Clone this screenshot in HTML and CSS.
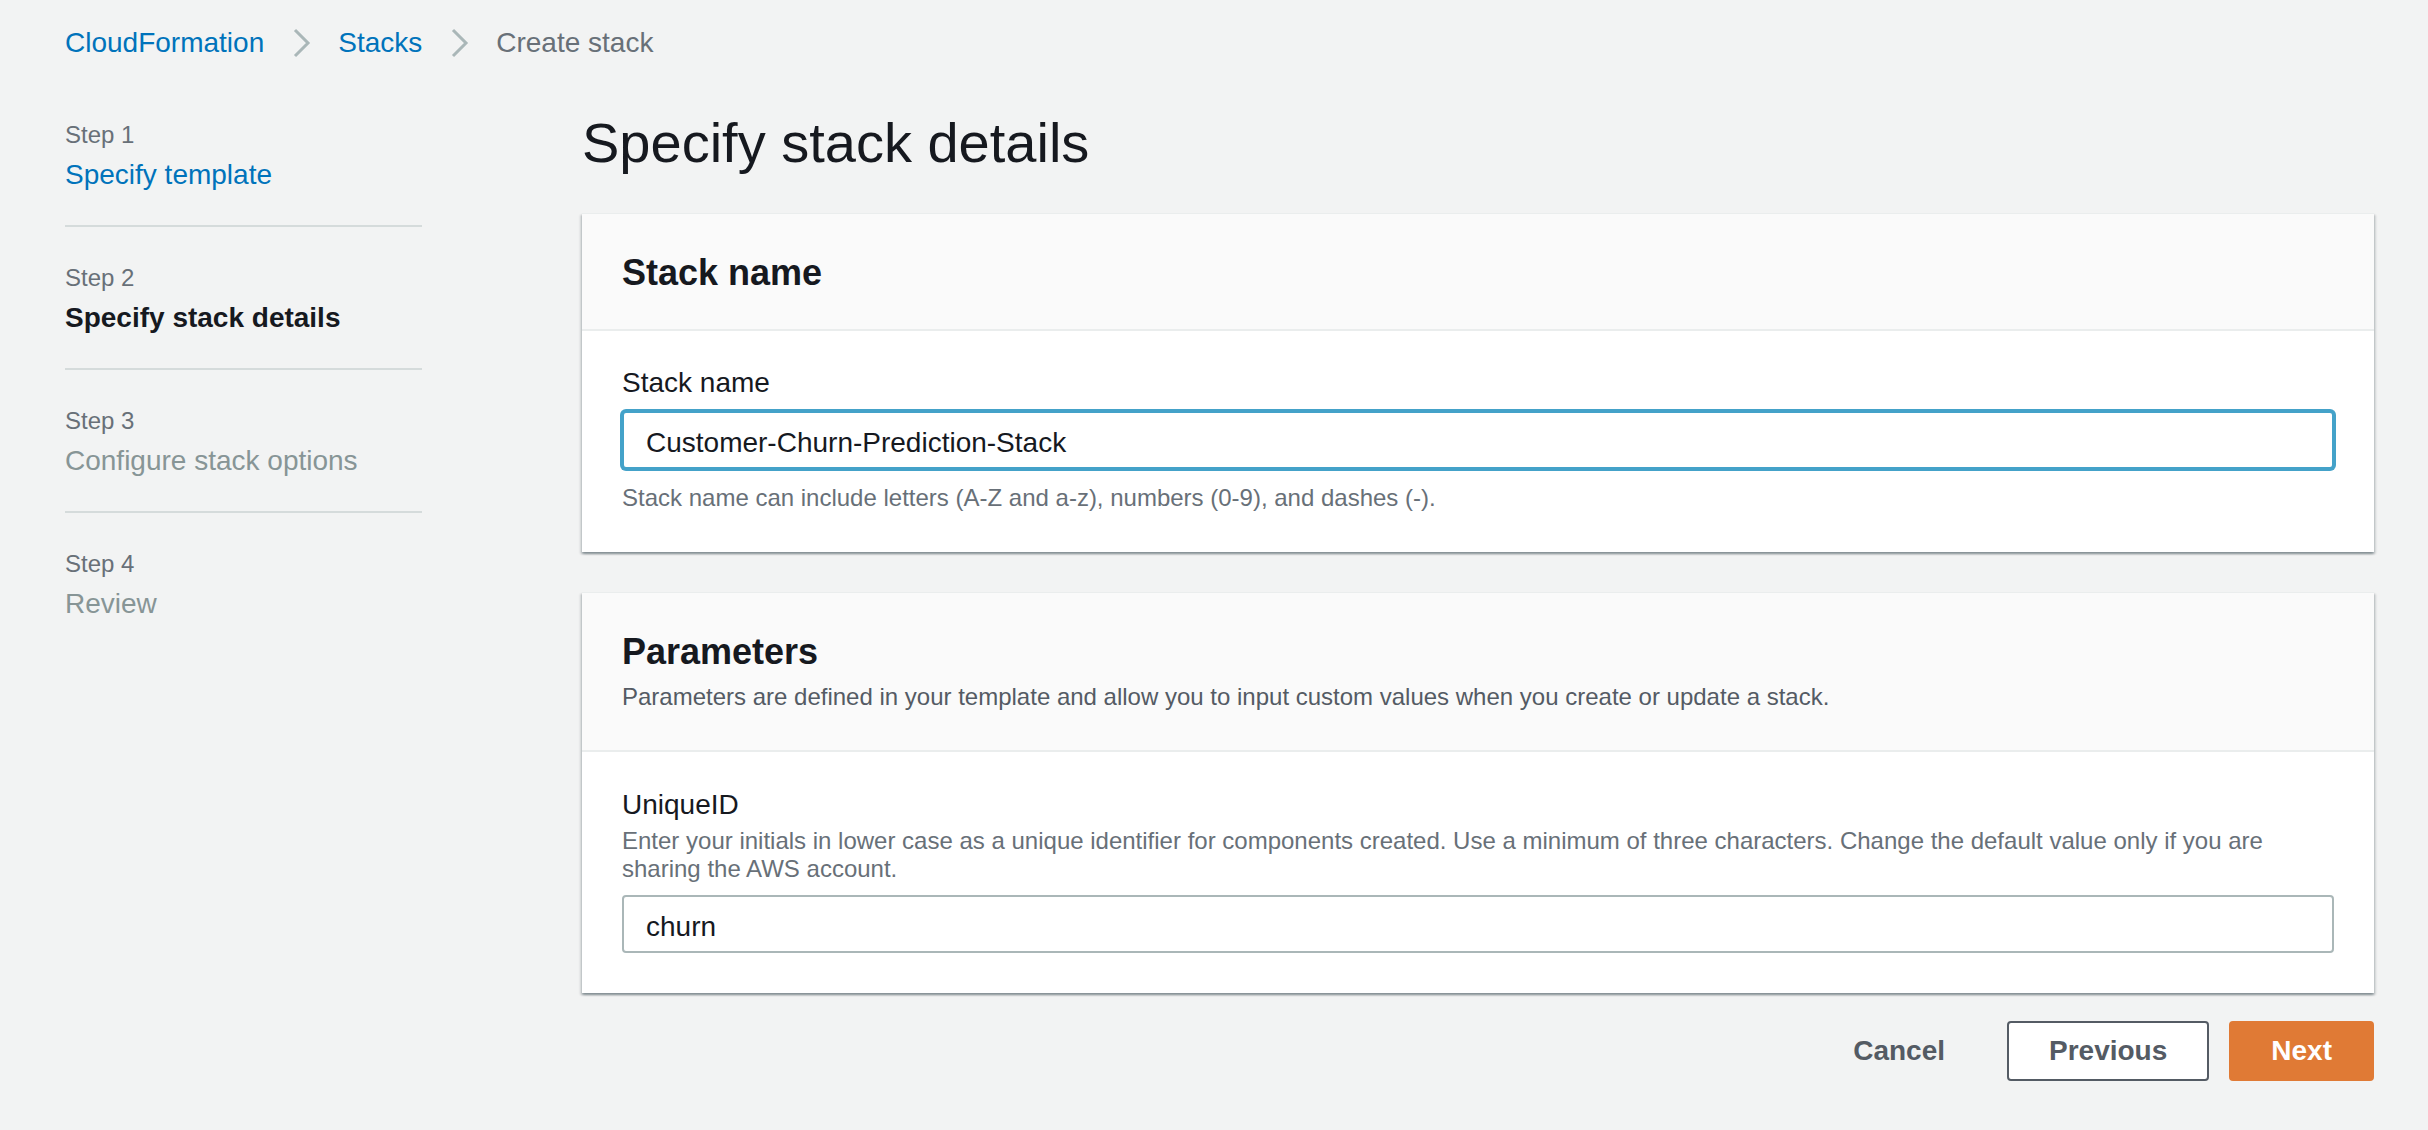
FILE: index.html
```html
<!DOCTYPE html>
<html lang="en">
<head>
<meta charset="utf-8">
<title>Create stack</title>
<link rel="stylesheet" href="styles.css">
</head>
<body>
<div class="page">
  <nav class="breadcrumbs">
    <a class="crumb-link" href="#">CloudFormation</a>
    <svg class="chev" width="18" height="30" viewBox="0 0 18 30"><polyline points="2,2 15,15 2,28" fill="none" stroke="#aab7b8" stroke-width="3"/></svg>
    <a class="crumb-link" href="#">Stacks</a>
    <svg class="chev" width="18" height="30" viewBox="0 0 18 30"><polyline points="2,2 15,15 2,28" fill="none" stroke="#aab7b8" stroke-width="3"/></svg>
    <span class="crumb-current">Create stack</span>
  </nav>
  <div class="layout">
    <ul class="steps">
      <li class="step">
        <div class="step-label">Step 1</div>
        <a class="step-title link" href="#">Specify template</a>
      </li>
      <li class="step">
        <div class="step-label">Step 2</div>
        <div class="step-title active">Specify stack details</div>
      </li>
      <li class="step">
        <div class="step-label">Step 3</div>
        <div class="step-title disabled">Configure stack options</div>
      </li>
      <li class="step">
        <div class="step-label">Step 4</div>
        <div class="step-title disabled">Review</div>
      </li>
    </ul>
    <main class="main">
      <h1 class="title">Specify stack details</h1>
      <section class="card">
        <div class="card-header">
          <h2 class="card-title">Stack name</h2>
        </div>
        <div class="card-body">
          <label class="field-label">Stack name</label>
          <div class="input focused">Customer-Churn-Prediction-Stack</div>
          <div class="constraint">Stack name can include letters (A-Z and a-z), numbers (0-9), and dashes (-).</div>
        </div>
      </section>
      <section class="card">
        <div class="card-header">
          <h2 class="card-title">Parameters</h2>
          <p class="card-desc">Parameters are defined in your template and allow you to input custom values when you create or update a stack.</p>
        </div>
        <div class="card-body body-params">
          <label class="field-label">UniqueID</label>
          <div class="field-desc">Enter your initials in lower case as a unique identifier for components created. Use a minimum of three characters. Change the default value only if you are sharing the AWS account.</div>
          <div class="input">churn</div>
        </div>
      </section>
      <div class="actions">
        <button class="btn btn-link">Cancel</button>
        <button class="btn btn-normal">Previous</button>
        <button class="btn btn-primary">Next</button>
      </div>
    </main>
  </div>
</div>
</body>
</html>
```
FILE: styles.css
```css
* { box-sizing: border-box; }
html, body { margin: 0; padding: 0; }
body {
  background: #f2f3f3;
  font-family: "Liberation Sans", Arial, sans-serif;
  color: #16191f;
  width: 2428px;
  height: 1130px;
  overflow: hidden;
}
.page {
  padding: 23px 54px 0 65px;
}
.breadcrumbs {
  display: flex;
  align-items: center;
  height: 40px;
  font-size: 28px;
  line-height: 40px;
}
.crumb-link {
  color: #0073bb;
  text-decoration: none;
}
.crumb-current { color: #687078; }
.chev {
  display: block;
  margin: 0 27px 0 29px;
}
.layout {
  display: flex;
  margin-top: 44px;
}
.steps {
  list-style: none;
  margin: 0 160px 0 0;
  padding: 12px 0 0 0;
  width: 357px;
  flex: none;
}
.step {
  padding-bottom: 30px;
  border-bottom: 2px solid #d5dbdb;
  margin-bottom: 35px;
}
.step:last-child {
  border-bottom: none;
}
.step-label {
  font-size: 24px;
  line-height: 32px;
  color: #687078;
  margin-bottom: 4px;
}
.step-title {
  display: block;
  font-size: 28px;
  line-height: 40px;
  text-decoration: none;
}
.step-title.link { color: #0073bb; }
.step-title.active { color: #16191f; font-weight: bold; }
.step-title.disabled { color: #879596; }
.main {
  flex: 1;
  min-width: 0;
}
.title {
  margin: 0 0 34px 0;
  font-size: 56px;
  line-height: 72px;
  font-weight: normal;
  color: #16191f;
}
.card {
  background: #ffffff;
  border-top: 1px solid #eaeded;
  box-shadow: 0 2px 2px 0 rgba(0,28,36,0.3), 2px 2px 2px 0 rgba(0,28,36,0.12), -2px 2px 2px 0 rgba(0,28,36,0.12);
  margin-bottom: 40px;
}
.card-header {
  background: #fafafa;
  border-bottom: 2px solid #eaeded;
  padding: 37px 40px 34px 40px;
}
.card-title {
  margin: 0;
  font-size: 36px;
  line-height: 44px;
  font-weight: bold;
  color: #16191f;
}
.card-desc {
  margin: 9px 0 5px 0;
  font-size: 24px;
  line-height: 28px;
  color: #545b64;
}
.card-body {
  padding: 32px 40px 40px 40px;
}
.body-params {
  padding-top: 33px;
}
.field-label {
  display: block;
  font-size: 28px;
  line-height: 40px;
  color: #16191f;
  margin-bottom: 8px;
}
.body-params .field-label { margin-bottom: 2px; }
.field-desc {
  font-size: 24px;
  line-height: 28px;
  color: #687078;
  margin-bottom: 12px;
  padding-right: 10px;
}
.input {
  height: 58px;
  border: 2px solid #aab7b8;
  border-radius: 4px;
  background: #ffffff;
  padding: 4px 22px 0 22px;
  font-size: 28px;
  line-height: 52px;
  color: #16191f;
}
.input.focused {
  border-color: #44a2c9;
  box-shadow: 0 0 0 2px #44a2c9;
}
.constraint {
  margin-top: 15px;
  font-size: 24px;
  line-height: 28px;
  color: #687078;
}
.actions {
  display: flex;
  justify-content: flex-end;
  gap: 20px;
  margin-top: -12px;
}
.btn {
  height: 60px;
  padding: 0 40px;
  border: 2px solid transparent;
  border-radius: 4px;
  font-family: "Liberation Sans", Arial, sans-serif;
  font-size: 28px;
  font-weight: bold;
  line-height: 56px;
  background: transparent;
  color: #545b64;
}
.btn-normal {
  background: #ffffff;
  border-color: #545b64;
}
.btn-primary {
  background: #e07a35;
  border-color: #e07a35;
  color: #ffffff;
}
```
